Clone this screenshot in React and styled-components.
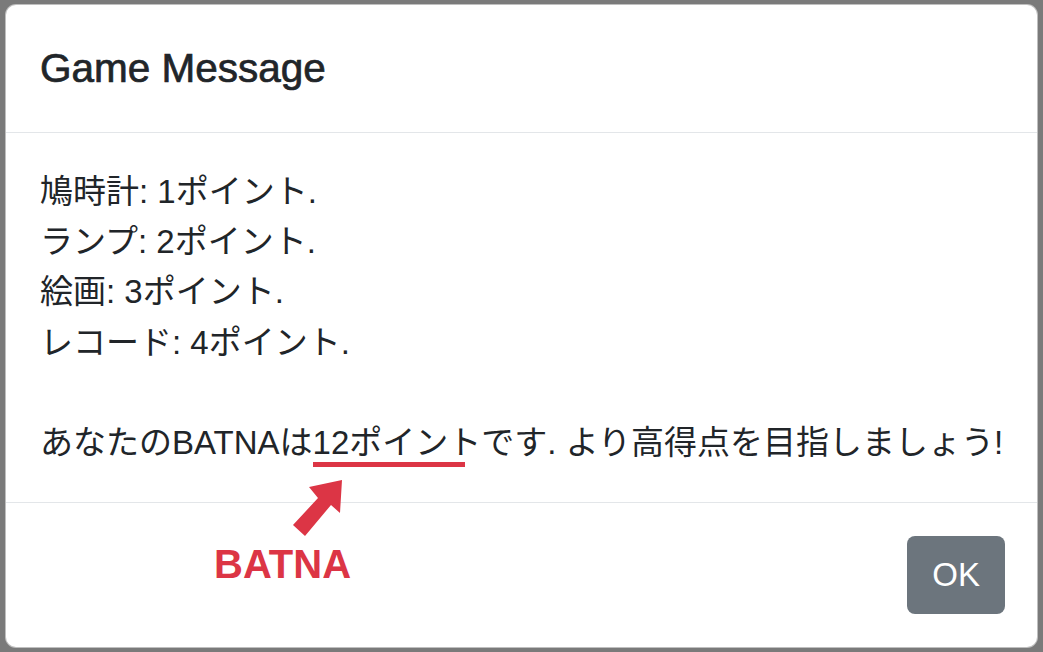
import React from 'react';
import styled, { createGlobalStyle } from 'styled-components';

const GlobalStyle = createGlobalStyle`
  html, body {
    margin: 0;
    padding: 0;
    background-color: #7a7a7a;
  }
  body {
    font-family: "Liberation Sans", "Noto Sans CJK JP", sans-serif;
    color: #212529;
  }
`

const lines = [
  '鳩時計: 1ポイント.',
  'ランプ: 2ポイント.',
  '絵画: 3ポイント.',
  'レコード: 4ポイント.',
];

const App = () => {
  return (
    <Backdrop>
      <GlobalStyle />
      <Modal>
        <Header>
          <Title>Game Message</Title>
        </Header>
        <Body>
          {lines.map(line => <Line key={line}>{line}</Line>)}
          <Line />
          <Line>
            あなたのBATNAは<Marked>12ポイント</Marked>です. より高得点を目指しましょう!
          </Line>
        </Body>
        <Footer>
          <OkButton>OK</OkButton>
        </Footer>
        <Arrow viewBox="5 4 1033 644">
          <polygon
            points="342,480 340,513 331,505 305,536 293,525 318,498 309,487"
            fill="#dc3545"
          />
        </Arrow>
        <Label>BATNA</Label>
      </Modal>
    </Backdrop>
  );
}

const Backdrop = styled.div`
  padding: 4px 5px;
  min-height: 644px;
`

const Modal = styled.div`
  position: relative;
  width: 1033px;
  box-sizing: border-box;
  background-color: #fff;
  border: 1px solid rgba(0, 0, 0, 0.25);
  border-radius: 11px;
  display: flex;
  flex-direction: column;
`

const Header = styled.div`
  padding: 32px 34px;
  border-bottom: 1px solid #e3e6e9;
`

const Title = styled.h5`
  margin: 0;
  font-size: 40.5px;
  font-weight: 500;
  line-height: 63px;
  color: #212529;
  -webkit-text-stroke: 0.7px #212529;
`

const Body = styled.div`
  padding: 34px 34px;
  font-size: 33px;
  line-height: 50.2px;
  border-bottom: 1px solid #e3e6e9;
`

const Line = styled.div`
  min-height: 50.2px;
  white-space: nowrap;
`

// red marker drawn under the BATNA value
const Marked = styled.span`
  position: relative;

  &::after {
    content: "";
    position: absolute;
    left: 0;
    right: 16px;
    bottom: -6px;
    height: 5px;
    background-color: #dc3545;
  }
`

const Footer = styled.div`
  display: flex;
  justify-content: flex-end;
  padding: 25px 24px;
`

const OkButton = styled.button`
  margin: 8px;
  height: 78px;
  padding: 0 25px;
  border: none;
  border-radius: 8px;
  background-color: #6c757d;
  color: #fff;
  font-family: "Liberation Sans", sans-serif;
  font-size: 33px;
  cursor: pointer;
`

const Arrow = styled.svg`
  position: absolute;
  top: -1px;
  left: -1px;
  width: 1033px;
  height: 644px;
  pointer-events: none;
`

const Label = styled.div`
  position: absolute;
  left: 208px;
  top: 540px;
  font-size: 40px;
  line-height: 39px;
  font-weight: bold;
  color: #dc3545;
`

export default App;
